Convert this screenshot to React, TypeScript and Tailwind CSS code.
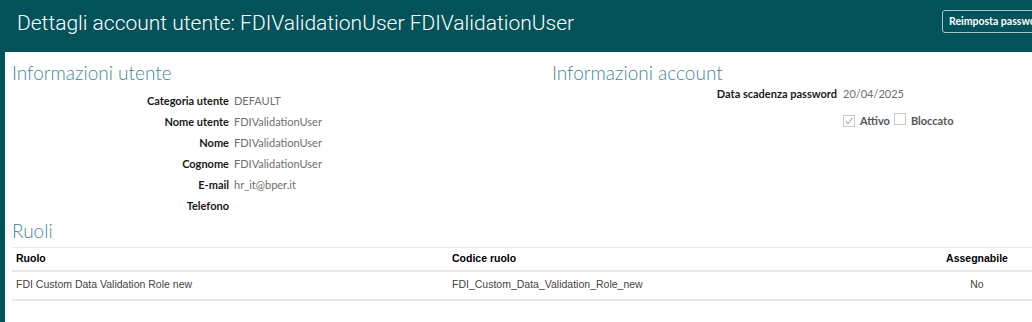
const seg = "font-['Lato','Noto_Sans',sans-serif]";

const userRows = [
  { label: "Categoria utente", value: "DEFAULT" },
  { label: "Nome utente", value: "FDIValidationUser" },
  { label: "Nome", value: "FDIValidationUser" },
  { label: "Cognome", value: "FDIValidationUser" },
  { label: "E-mail", value: "hr_it@bper.it" },
  { label: "Telefono", value: "" },
];

function Check({ checked }: { checked?: boolean }) {
  return (
    <span className="inline-flex h-[12px] w-[12px] items-center justify-center border border-[#c8c8c8] bg-white">
      {checked && (
        <svg width="10" height="10" viewBox="0 0 10 10">
          <path d="M1.5 5.2 L4 7.6 L8.6 1.8" fill="none" stroke="#b4b4b4" strokeWidth="1.2" />
        </svg>
      )}
    </span>
  );
}

export default function App() {
  return (
    <div className={`min-h-[322px] w-[1032px] overflow-hidden border-l-[5px] border-[#02525a] bg-white ${seg}`}>
      {/* Header */}
      <div className="-ml-[5px] flex h-[52px] items-start justify-between bg-[#02525a] pl-[17px]">
        <h1 className="mt-[8px] whitespace-nowrap font-['Roboto',sans-serif] text-[21px] font-light text-white">
          Dettagli account utente: FDIValidationUser FDIValidationUser
        </h1>
        <button className="mt-[10px] h-[23px] w-[110px] shrink-0 -mr-[20px] whitespace-nowrap rounded-[3px] border border-[#a9c3c6] px-[6px] text-left text-[10.5px] font-bold text-white">
          Reimposta password
        </button>
      </div>

      <div className="pl-[7px]">
        <div className="flex">
          {/* User info */}
          <div className="w-[540px]">
            <h2 className="mt-[7px] text-[19px] font-light text-[#3f8793]">Informazioni utente</h2>
            <div className="mt-[5px] flex flex-col">
              {userRows.map((r) => (
                <div key={r.label} className="flex h-[21px] items-start text-[11px]">
                  <span className="w-[217px] text-right font-bold text-[#1a1a1a]">{r.label}</span>
                  <span className="ml-[5px] text-[#6e6e6e]">{r.value}</span>
                </div>
              ))}
            </div>
          </div>

          {/* Account info */}
          <div className="flex-1">
            <h2 className="mt-[7px] text-[19px] font-light text-[#3f8793]">Informazioni account</h2>
            <div className="mt-[-2px] flex text-[11px]">
              <span className="w-[285px] text-right font-bold text-[#1a1a1a]">Data scadenza password</span>
              <span className="ml-[6px] text-[#6e6e6e]">20/04/2025</span>
            </div>
            <div className="mt-[11px] flex items-center pl-[291px] text-[11px] font-bold text-[#555]">
              <Check checked />
              <span className="ml-[5px]">Attivo</span>
              <span className="ml-[4px]"><Check /></span>
              <span className="ml-[5px]">Bloccato</span>
            </div>
          </div>
        </div>

        {/* Roles */}
        <h2 className="mt-[-2px] text-[19px] font-light text-[#3f8793]">Ruoli</h2>
        <table className="mt-[2px] w-[1020px] border-collapse font-['Liberation_Sans',Arial,sans-serif] text-[10.5px]">
          <thead>
            <tr className="h-[23px] border-t border-b-2 border-[#e6e8ec]">
              <th className="w-[440px] pl-[4px] text-left font-bold text-black">Ruolo</th>
              <th className="text-left font-bold text-black">Codice ruolo</th>
              <th className="w-[100px] pr-[10px] text-center font-bold text-black">Assegnabile</th>
            </tr>
          </thead>
          <tbody>
            <tr className="h-[29px] border-b-2 border-[#e6e8ec] text-[#444]">
              <td className="pl-[4px]">FDI Custom Data Validation Role new</td>
              <td>FDI_Custom_Data_Validation_Role_new</td>
              <td className="pr-[10px] text-center">No</td>
            </tr>
          </tbody>
        </table>
      </div>
    </div>
  );
}
